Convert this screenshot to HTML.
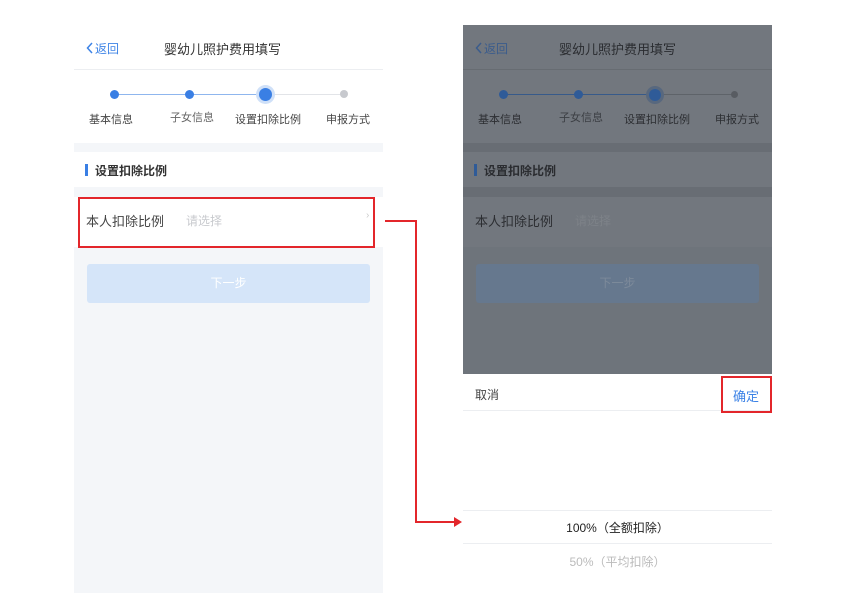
<!DOCTYPE html><html><head><meta charset="utf-8"><style>
*{margin:0;padding:0;box-sizing:border-box}
body{width:864px;height:593px;background:#fff;position:relative;overflow:hidden;font-family:"Liberation Sans","Noto Sans CJK SC",sans-serif}
.a{position:absolute}
.p{position:absolute;top:25px;width:309px;height:568px;background:#f4f6f9}
.t{font-size:12px;white-space:nowrap}
</style></head><body>
<div class="p" style="left:74px">
 <div class="a" style="left:0;top:0;width:309px;height:118px;background:#fff"></div>
 <div class="a" style="left:0;top:44px;width:309px;height:1px;background:#eceef1"></div>
 <svg class="a" style="left:12px;top:17px" width="8" height="12"><path d="M6 1L1.5 6L6 11" fill="none" stroke="#3d83e6" stroke-width="1.5"/></svg>
 <div class="a t" style="left:21px;top:15px;color:#3d83e6">返回</div>
 <div class="a t" style="left:90px;top:14px;color:#333;font-size:13px">婴幼儿照护费用填写</div>
 <div class="a" style="left:40px;top:69px;width:75px;height:1px;background:#8fb6ee"></div>
 <div class="a" style="left:115px;top:69px;width:77px;height:1px;background:#8fb6ee"></div>
 <div class="a" style="left:192px;top:69px;width:78px;height:1px;background:#e2e4e8"></div>
 <div class="a" style="left:36px;top:65px;width:9px;height:9px;border-radius:50%;background:#3a7fe4"></div>
 <div class="a" style="left:111px;top:65px;width:9px;height:9px;border-radius:50%;background:#3a7fe4"></div>
 <div class="a" style="left:185px;top:63px;width:13px;height:13px;border-radius:50%;background:#3a7fe4;box-shadow:0 0 0 3px #cfe0f8"></div>
 <div class="a" style="left:266px;top:65px;width:8px;height:8px;border-radius:50%;background:#c7c9ce"></div>
 <div class="a t" style="left:15px;top:86px;color:#444;font-size:11px">基本信息</div>
 <div class="a t" style="left:96px;top:84px;color:#666;font-size:11px">子女信息</div>
 <div class="a t" style="left:161px;top:86px;color:#444;font-size:11px">设置扣除比例</div>
 <div class="a t" style="left:252px;top:86px;color:#444;font-size:11px">申报方式</div>
 <div class="a" style="left:0;top:127px;width:309px;height:35px;background:#fff"></div>
 <div class="a" style="left:11px;top:139px;width:3px;height:12px;background:#3a7fe4"></div>
 <div class="a t" style="left:21px;top:137px;color:#333;font-weight:bold">设置扣除比例</div>
 <div class="a" style="left:0;top:172px;width:309px;height:50px;background:#fff"></div>
 <div class="a t" style="left:12px;top:186px;color:#444;font-size:13px">本人扣除比例</div>
 <div class="a t" style="left:112px;top:187px;color:#c8cace">请选择</div>
 <div class="a t" style="left:292px;top:185px;color:#ccc;font-size:10px">›</div>
 <div class="a" style="left:13px;top:239px;width:283px;height:39px;background:#d5e5f9;border-radius:3px;color:#fff;font-size:12px;text-align:center;line-height:39px">下一步</div>
</div>
<div class="p" style="left:463px;background:#6e747b">
 <div class="a" style="left:0;top:0;width:309px;height:118px;background:#72777e"></div>
 <div class="a" style="left:0;top:44px;width:309px;height:1px;background:#676c72"></div>
 <svg class="a" style="left:12px;top:17px" width="8" height="12"><path d="M6 1L1.5 6L6 11" fill="none" stroke="#3b5c8c" stroke-width="1.5"/></svg>
 <div class="a t" style="left:21px;top:15px;color:#3b5c8c">返回</div>
 <div class="a t" style="left:96px;top:14px;color:#2a2c30;font-size:13px">婴幼儿照护费用填写</div>
 <div class="a" style="left:40px;top:69px;width:150px;height:1px;background:#375a8a"></div>
 <div class="a" style="left:190px;top:69px;width:80px;height:1px;background:#5e6369"></div>
 <div class="a" style="left:36px;top:65px;width:9px;height:9px;border-radius:50%;background:#2f5b98"></div>
 <div class="a" style="left:111px;top:65px;width:9px;height:9px;border-radius:50%;background:#2f5b98"></div>
 <div class="a" style="left:186px;top:64px;width:12px;height:12px;border-radius:50%;background:#2f5b98;box-shadow:0 0 0 3px #58687e"></div>
 <div class="a" style="left:268px;top:66px;width:7px;height:7px;border-radius:50%;background:#585c62"></div>
 <div class="a t" style="left:15px;top:86px;color:#2c2e32;font-size:11px">基本信息</div>
 <div class="a t" style="left:96px;top:84px;color:#3c3f44;font-size:11px">子女信息</div>
 <div class="a t" style="left:161px;top:86px;color:#2c2e32;font-size:11px">设置扣除比例</div>
 <div class="a t" style="left:252px;top:86px;color:#2c2e32;font-size:11px">申报方式</div>
 <div class="a" style="left:0;top:118px;width:309px;height:9px;background:#686d74"></div>
 <div class="a" style="left:0;top:127px;width:309px;height:35px;background:#72777e"></div>
 <div class="a" style="left:0;top:162px;width:309px;height:10px;background:#686d74"></div>
 <div class="a" style="left:0;top:172px;width:309px;height:50px;background:#72777e"></div>
 <div class="a" style="left:11px;top:139px;width:3px;height:12px;background:#2f5b98"></div>
 <div class="a t" style="left:21px;top:137px;color:#2a2c30;font-weight:bold">设置扣除比例</div>
 <div class="a t" style="left:12px;top:186px;color:#2c2e32;font-size:13px">本人扣除比例</div>
 <div class="a t" style="left:112px;top:187px;color:#7d8288">请选择</div>
 <div class="a" style="left:13px;top:239px;width:283px;height:39px;background:#66788e;border-radius:3px;color:#7d8a9a;font-size:12px;text-align:center;line-height:39px">下一步</div>
 <div class="a" style="left:0;top:349px;width:309px;height:219px;background:#fff"></div>
 <div class="a" style="left:0;top:385px;width:309px;height:1px;background:#eceef1"></div>
 <div class="a t" style="left:12px;top:361px;color:#444">取消</div>
 <div class="a t" style="left:270px;top:361px;color:#3d83e6;font-size:13px">确定</div>
 <div class="a" style="left:0;top:485px;width:309px;height:1px;background:#eceef1"></div>
 <div class="a" style="left:0;top:518px;width:309px;height:1px;background:#eceef1"></div>
 <div class="a t" style="left:0;width:309px;text-align:center;top:494px;color:#222;font-size:12px">100%（全额扣除）</div>
 <div class="a t" style="left:0;width:309px;text-align:center;top:528px;color:#bbb;font-size:12px">50%（平均扣除）</div>
</div>
<div class="a" style="left:78px;top:197px;width:297px;height:51px;border:2px solid #e3262b"></div>
<div class="a" style="left:721px;top:376px;width:51px;height:37px;border:2px solid #e3262b"></div>
<div class="a" style="left:385px;top:220px;width:31px;height:1.5px;background:#e3262b"></div>
<div class="a" style="left:415px;top:220px;width:1.5px;height:302px;background:#e3262b"></div>
<div class="a" style="left:415px;top:521px;width:42px;height:1.5px;background:#e3262b"></div>
<div class="a" style="left:454px;top:517px;width:0;height:0;border-left:8px solid #e3262b;border-top:5px solid transparent;border-bottom:5px solid transparent"></div>
</body></html>
